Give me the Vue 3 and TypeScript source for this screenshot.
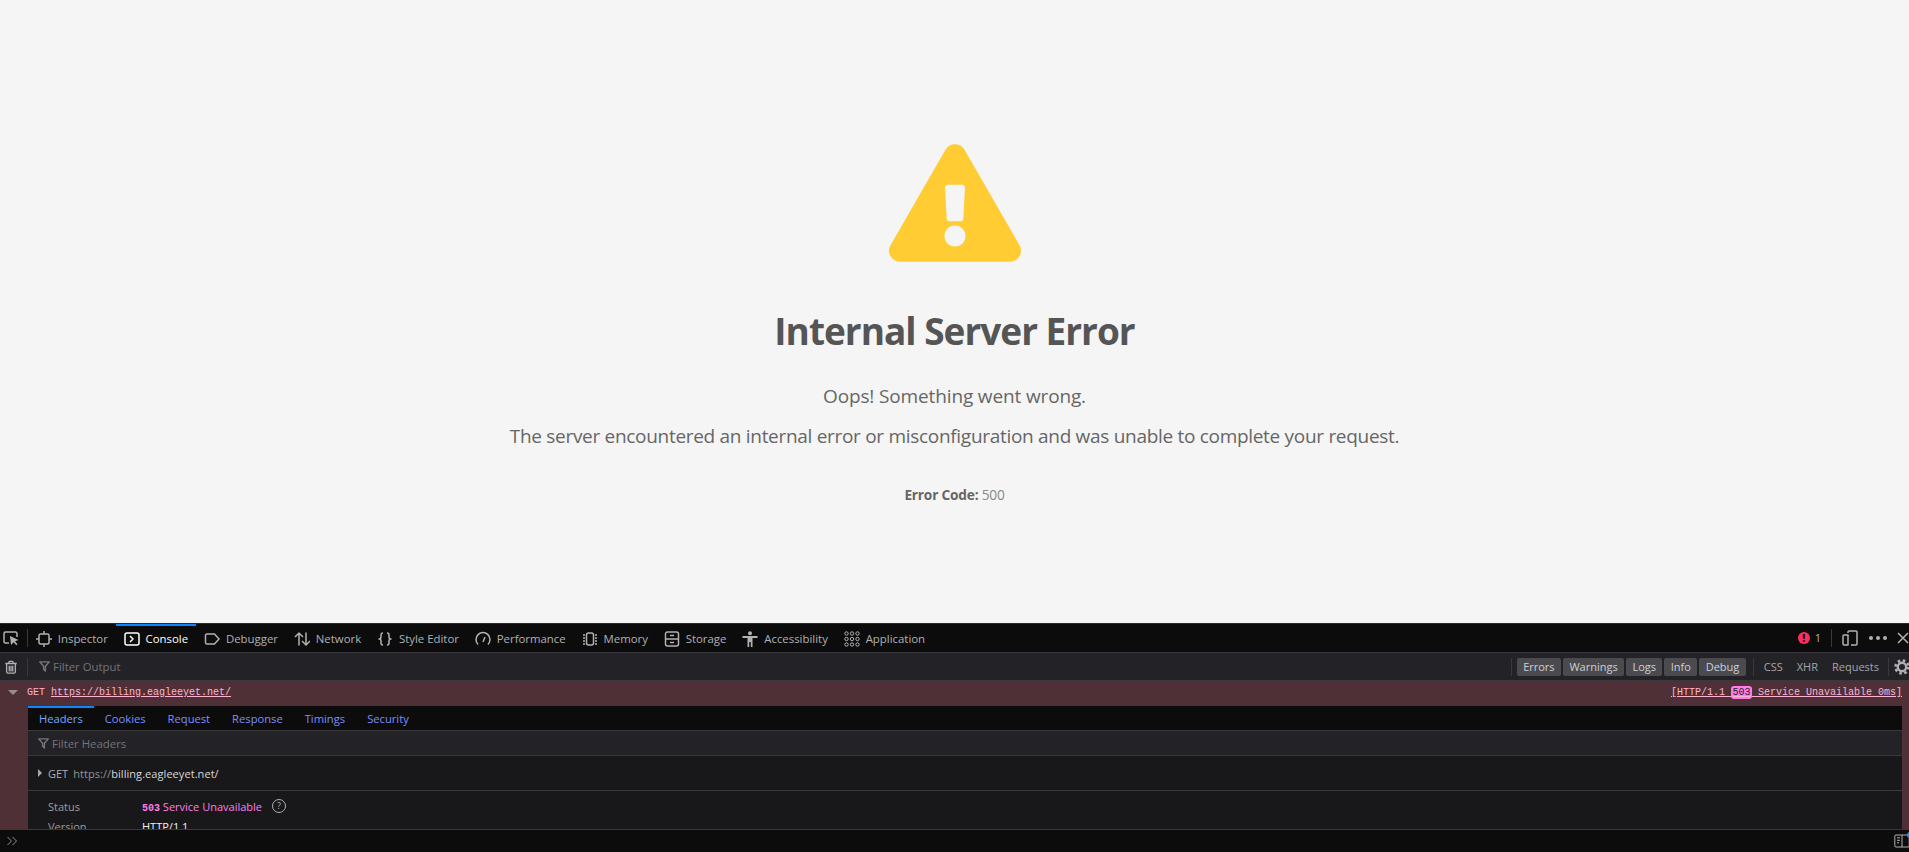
<script setup lang="ts">
interface Tab { label: string; shapes: string; active?: boolean }

const tabs: Tab[] = [
  { label: 'Inspector', shapes: 'M4.5 3h7A1.5 1.5 0 0 1 13 4.500v7a1.500 1.500 0 0 1-1.500 1.500h-7A1.500 1.500 0 0 1 3 11.500v-7A1.500 1.500 0 0 1 4.500 3zM8 0v3M8 13v3M0 8h3M13 8h3' },
  { label: 'Console', active: true, shapes: 'M3 2h10a2 2 0 0 1 2 2v8a2 2 0 0 1-2 2H3a2 2 0 0 1-2-2V4a2 2 0 0 1 2-2zM6 5l3 3-3 3' },
  { label: 'Debugger', shapes: 'M3 3h7.500l4.500 5-4.500 5H3a1.500 1.500 0 0 1-1.500-1.500v-7A1.500 1.500 0 0 1 3 3z' },
  { label: 'Network', shapes: 'M5 14.500V2M1 6l4-4 4 4M12 1.500V14M8 10l4 4 4-4' },
  { label: 'Style Editor', shapes: 'M6 2C4 2 4 3 4 4v2c0 1-.6 2-2 2 1.400 0 2 1 2 2v2c0 1 0 2 2 2M10 2c2 0 2 1 2 2v2c0 1 .6 2 2 2-1.400 0-2 1-2 2v2c0 1 0 2-2 2' },
  { label: 'Performance', shapes: 'M3 13.500a7 7 0 1 1 10 0M8 11l2-5' },
  { label: 'Memory', shapes: 'M6.500 2h3a2 2 0 0 1 2 2v8a2 2 0 0 1-2 2h-3a2 2 0 0 1-2-2V4a2 2 0 0 1 2-2zM1 4h2M1 7h2M1 10h2M1 13h2M13 4h2M13 7h2M13 10h2M13 13h2' },
  { label: 'Storage', shapes: 'M3.500 1h9a2 2 0 0 1 2 2v10a2 2 0 0 1-2 2h-9a2 2 0 0 1-2-2V3a2 2 0 0 1 2-2zM1.500 8h13M6 4.500h4M6 11.500h4' },
  { label: 'Accessibility', shapes: '' },
  { label: 'Application', shapes: '' },
]

const gridPoints: number[] = [2.5, 8, 13.5]
const levels: string[] = ['Errors', 'Warnings', 'Logs', 'Info', 'Debug']
const kinds: string[] = ['CSS', 'XHR', 'Requests']
const detailTabs: string[] = ['Headers', 'Cookies', 'Request', 'Response', 'Timings', 'Security']
</script>

<template>
  <div class="page">
    <main class="error-page">
      <svg class="warn" viewBox="0 0 576 512" aria-hidden="true">
        <path fill="#ffcc33" d="M569.517 440.013C587.975 472.007 564.806 512 527.94 512H48.054c-36.937 0-59.999-40.055-41.577-71.987L246.423 23.985c18.467-32.009 64.72-31.951 83.154 0l239.94 416.028zM288 354c-25.405 0-46 20.595-46 46s20.595 46 46 46 46-20.595 46-46-20.595-46-46-46zm-43.673-165.346l7.418 136c.347 6.364 5.609 11.346 11.982 11.346h48.546c6.373 0 11.635-4.982 11.982-11.346l7.418-136c.375-6.874-5.098-12.654-11.982-12.654h-63.383c-6.884 0-12.356 5.78-11.981 12.654z" />
      </svg>
      <h1>Internal Server Error</h1>
      <p class="lead first">Oops! Something went wrong.</p>
      <p class="lead">The server encountered an internal error or misconfiguration and was unable to complete your request.</p>
      <p class="code"><strong>Error Code:</strong> 500</p>
    </main>

    <section class="devtools">
      <div class="toolbar">
        <button class="picker">
          <svg viewBox="0 0 16 16" class="ico"><path class="st" d="M6 13H2.500A1.500 1.500 0 0 1 1 11.500v-8A1.500 1.500 0 0 1 2.500 2h10A1.500 1.500 0 0 1 14 3.500V7" /><path d="M7 6l8.500 4-3.500 1.300 2.500 3-1.300 1-2.500-3L8 15z" fill="#b1b1b3" /></svg>
        </button>
        <span class="sep"></span>
        <div v-for="t in tabs" :key="t.label" class="tab" :class="{ active: t.active }">
          <svg viewBox="0 0 16 16" class="ico">
            <template v-if="t.label === 'Accessibility'">
              <circle cx="8" cy="2.200" r="2" fill="#b1b1b3" />
              <path d="M.5 5h15v2H10.500v9H8.800v-5H7.200v5H5.500V7H.5z" fill="#b1b1b3" />
            </template>
            <template v-else-if="t.label === 'Application'">
              <template v-for="y in gridPoints" :key="y">
                <circle v-for="x in gridPoints" :key="x" :cx="x" :cy="y" r="1.700" class="st thin" />
              </template>
            </template>
            <path v-else class="st" :d="t.shapes" />
          </svg>
          <span>{{ t.label }}</span>
        </div>
        <div class="tool-end">
          <span class="badge">!</span>
          <span class="count">1</span>
          <span class="sep end-sep"></span>
          <svg viewBox="0 0 16 16" class="ico dock"><path class="st" d="M6 5H2a1 1 0 0 0-1 1v8a1 1 0 0 0 1 1h4V5zM6 3V2a1 1 0 0 1 1-1h7a1 1 0 0 1 1 1v12a1 1 0 0 1-1 1H9" /></svg>
          <span class="dots"><i></i><i></i><i></i></span>
          <svg viewBox="0 0 12 12" class="close"><path class="st" d="M1 1l10 10M11 1L1 11" /></svg>
        </div>
      </div>

      <div class="filterbar">
        <svg viewBox="0 0 16 16" class="ico trash"><path class="st" d="M1.500 4h13M5.500 4V2.500a1 1 0 0 1 1-1h3a1 1 0 0 1 1 1V4M3 4v9.500A1.500 1.500 0 0 0 4.500 15h7a1.500 1.500 0 0 0 1.500-1.500V4M6 6.500V13M8 6.500V13M10 6.500V13" /></svg>
        <span class="sep"></span>
        <svg viewBox="0 0 12 12" class="funnel"><path class="st dim" d="M.8 1h10.400L7 5.800V11L5 9V5.800z" /></svg>
        <span class="placeholder">Filter Output</span>
        <div class="filters">
          <span class="sep"></span>
          <span v-for="l in levels" :key="l" class="level">{{ l }}</span>
          <span class="sep sep-mid"></span>
          <span v-for="k in kinds" :key="k" class="kind">{{ k }}</span>
          <span class="sep sep-last"></span>
          <svg viewBox="0 0 16 16" class="gear">
            <circle cx="8" cy="8" r="4.200" fill="none" stroke="#b1b1b3" stroke-width="2.400" />
            <circle cx="8" cy="8" r="6.500" fill="none" stroke="#b1b1b3" stroke-width="2.600" stroke-dasharray="2.550 2.550" />
          </svg>
        </div>
      </div>

      <div class="log">
        <div class="log-head">
          <span class="caret-down"></span>
          <span class="method">GET</span>
          <a class="url">https://billing.eagleeyet.net/</a>
          <a class="summary">[HTTP/1.1 <b>503</b> Service Unavailable 0ms]</a>
        </div>
        <div class="detail">
          <div class="detail-tabs">
            <span v-for="(d, i) in detailTabs" :key="d" class="dtab" :class="{ on: i === 0 }">{{ d }}</span>
          </div>
          <div class="detail-filter">
            <svg viewBox="0 0 12 12" class="funnel"><path class="st dim" d="M.8 1h10.400L7 5.800V11L5 9V5.800z" /></svg>
            <span class="placeholder">Filter Headers</span>
          </div>
          <div class="request-line">
            <span class="caret-right"></span>
            <span class="rq-method">GET</span>
            <span class="rq-url"><span>https://</span>billing.eagleeyet.net/</span>
          </div>
          <div class="fields">
            <div class="field">
              <span class="name">Status</span>
              <span class="value status"><span class="mono">503</span> Service Unavailable</span>
              <span class="help">?</span>
            </div>
            <div class="field">
              <span class="name">Version</span>
              <span class="value version">HTTP/1.1</span>
            </div>
          </div>
        </div>
      </div>

      <div class="command">
        <svg viewBox="0 0 12 12" class="chev"><path class="st" d="M1.500 2l4 4-4 4M6.500 2l4 4-4 4" /></svg>
        <span class="side">
          <svg viewBox="0 0 16 14" class="side-ico"><path class="st" d="M2 1h12a1.200 1.200 0 0 1 1.200 1.200v9.600A1.200 1.200 0 0 1 14 13H2a1.200 1.200 0 0 1-1.200-1.200V2.200A1.200 1.200 0 0 1 2 1zM8 1v12M3 3.800h3M3 6.300h3M3 8.800h2" /></svg>
          <i class="dot"></i>
        </span>
      </div>
    </section>
  </div>
</template>

<style scoped>
.page {
  height: 852px;
  display: flex;
  flex-direction: column;
  overflow: hidden;
  font-family: "Open Sans", "Noto Sans", sans-serif;
}

.error-page {
  height: 623px;
  flex: none;
  background: #f5f5f5;
  display: flex;
  flex-direction: column;
  align-items: center;
  padding-top: 144px;
  box-sizing: border-box;
}
.warn { width: 132px; height: 118px; display: block; }
h1 {
  margin: 39px 0 0;
  font-size: 37px;
  line-height: 60px;
  font-weight: 700;
  letter-spacing: -1px;
  color: #555;
}
.lead {
  margin: 14px 0 0;
  font-size: 19px;
  line-height: 26px;
  letter-spacing: -0.3px;
  color: #666;
}
.lead.first { margin-top: 22px; letter-spacing: -0.14px; }
.code {
  margin: 37px 0 0;
  font-size: 13.700px;
  line-height: 18px;
  letter-spacing: -0.2px;
  color: #888;
}
.code strong { color: #666; font-weight: 700; }

.devtools {
  flex: 1;
  min-height: 0;
  display: flex;
  flex-direction: column;
  background: #0c0c0d;
  border-top: 1px solid #2b2b2e;
  font-size: 11.400px;
  color: #b1b1b3;
}
.toolbar {
  height: 28px;
  flex: none;
  display: flex;
  align-items: center;
  border-bottom: 1px solid #38383d;
}
.ico { width: 16px; height: 16px; flex: none; display: block; }
.st {
  fill: none;
  stroke: #b1b1b3;
  stroke-width: 1.500;
  stroke-linejoin: round;
}
.st.thin { stroke-width: 1; }
.st.dim { stroke: #77777c; }
.picker {
  all: unset;
  width: 16px;
  margin-left: 3px;
  display: block;
}
.sep {
  width: 1px;
  height: 18px;
  background: #38383d;
  flex: none;
  margin: 0 0 0 8px;
}
.tab {
  height: 100%;
  box-sizing: border-box;
  display: flex;
  align-items: center;
  gap: 5.800px;
  padding: 0 8px 1px;
  border-top: 2px solid transparent;
  white-space: nowrap;
}
.tab.active { border-top-color: #0a84ff; color: #fff; }
.tab.active .st { stroke: #fff; }
.tool-end {
  margin-left: auto;
  display: flex;
  align-items: center;
  padding-bottom: 1px;
}
.badge {
  width: 12px;
  height: 12px;
  border-radius: 50%;
  background: #ff2d62;
  color: #0c0c0d;
  font-size: 10px;
  font-weight: 800;
  line-height: 12px;
  text-align: center;
}
.count { margin-left: 5px; font-size: 11px; }
.end-sep { margin-left: 10px; }
.dock { margin-left: 10px; }
.dots { display: flex; gap: 3px; margin-left: 11px; }
.dots i { width: 4px; height: 4px; border-radius: 50%; background: #b1b1b3; }
.close { width: 12px; height: 12px; margin-left: 10px; flex: none; }

.filterbar {
  height: 27px;
  flex: none;
  display: flex;
  align-items: center;
  background: #232327;
  border-bottom: 1px solid #38383d;
}
.trash { margin-left: 4px; width: 14px; height: 16px; }
.filterbar > .sep { margin-left: 9px; }
.funnel { width: 11px; height: 11px; flex: none; margin-left: 11px; }
.placeholder { color: #737378; margin-left: 3px; white-space: nowrap; }
.filters {
  margin-left: auto;
  display: flex;
  align-items: center;
  height: 100%;
}
.filters > .sep:first-child { margin: 0 5px 0 0; }
.level {
  height: 18px;
  line-height: 18px;
  padding: 0 6.400px;
  margin-right: 2px;
  background: #4a4a4f;
  border-radius: 2px;
  color: #d0d0d3;
  font-size: 11px;
}
.sep-mid { margin-left: 5px; margin-right: 3px; }
.kind { padding: 0 7px; color: #a5a5a8; font-size: 11px; }
.sep-last { margin-left: 2px; margin-right: 5px; }
.gear { width: 16px; height: 16px; flex: none; margin-right: -1px; }

.log {
  flex: 1;
  min-height: 0;
  display: flex;
  flex-direction: column;
  background: #4f3037;
  overflow: hidden;
}
.log-head {
  height: 23px;
  padding: 0 7px 2px 8px;
  flex: none;
  display: flex;
  align-items: center;
  font-family: "Liberation Mono", monospace;
  font-size: 10px;
  color: #ffb3d2;
  white-space: nowrap;
}
.caret-down {
  width: 0;
  height: 0;
  border-left: 5px solid transparent;
  border-right: 5px solid transparent;
  border-top: 5px solid #9c8a8e;
  margin-right: 9px;
}
.method { margin-right: 6px; }
.url { text-decoration: underline; color: #ffb3d2; }
.summary { margin-left: auto; text-decoration: underline; color: #ffb3d2; }
.summary b {
  font-weight: 400;
  background: #ff7de9;
  color: #2b2125;
  padding: 1px 1.500px;
  border-radius: 3px;
}
.detail {
  flex: 1;
  min-height: 0;
  margin: 0 7px 0 28px;
  background: #18181a;
  overflow: hidden;
}
.detail-tabs {
  height: 24px;
  display: flex;
  background: #0c0c0d;
  border-bottom: 1px solid #38383d;
}
.dtab {
  padding: 0 11px;
  line-height: 22px;
  border-top: 2px solid transparent;
  color: #7c8cff;
  font-size: 11.200px;
}
.dtab.on { border-top-color: #0a84ff; color: #75a8ff; }
.detail-filter {
  height: 24px;
  display: flex;
  align-items: center;
  background: #232327;
  border-bottom: 1px solid #38383d;
}
.detail-filter .funnel { margin-left: 10px; margin-top: 1px; }
.request-line {
  height: 34px;
  display: flex;
  align-items: center;
  border-bottom: 1px solid #38383d;
  font-size: 11px;
  color: #b1b1b3;
}
.caret-right {
  width: 0;
  height: 0;
  margin-left: 10px;
  border-top: 4px solid transparent;
  border-bottom: 4px solid transparent;
  border-left: 4px solid #a8a8aa;
}
.rq-method { margin-left: 6px; }
.rq-url { margin-left: 5px; color: #d7d7da; letter-spacing: 0.06px; }
.rq-url span { color: #939396; }
.fields { padding-top: 5px; }
.field {
  display: flex;
  align-items: center;
  height: 20px;
  font-size: 11px;
}
.name { width: 94px; margin-left: 20px; flex: none; color: #9c9c9f; }
.status { color: #ff7de9; }
.mono { font-family: "Liberation Mono", monospace; font-size: 10px; font-weight: 700; }
.version { color: #f0f0f2; }
.help {
  width: 12px;
  height: 12px;
  margin-left: 10px;
  border: 1px solid #b1b1b3;
  border-radius: 50%;
  font-size: 9px;
  line-height: 12px;
  text-align: center;
}
.command {
  height: 22px;
  flex: none;
  display: flex;
  align-items: center;
  justify-content: space-between;
  border-top: 1px solid #38383d;
  background: #0c0c0d;
}
.chev { width: 12px; height: 12px; margin-left: 6px; }
.chev .st { stroke: #8f8f92; stroke-width: 1; }
.side { position: relative; display: block; width: 15px; height: 14px; }
.side-ico { width: 16px; height: 14px; display: block; }
.side-ico .st { stroke-width: 1; }
.dot {
  position: absolute;
  top: -2px;
  right: -4px;
  width: 6px;
  height: 6px;
  border-radius: 50%;
  background: #0a9dff;
}
</style>

<style>
html, body { background: #f5f5f5; }
</style>
